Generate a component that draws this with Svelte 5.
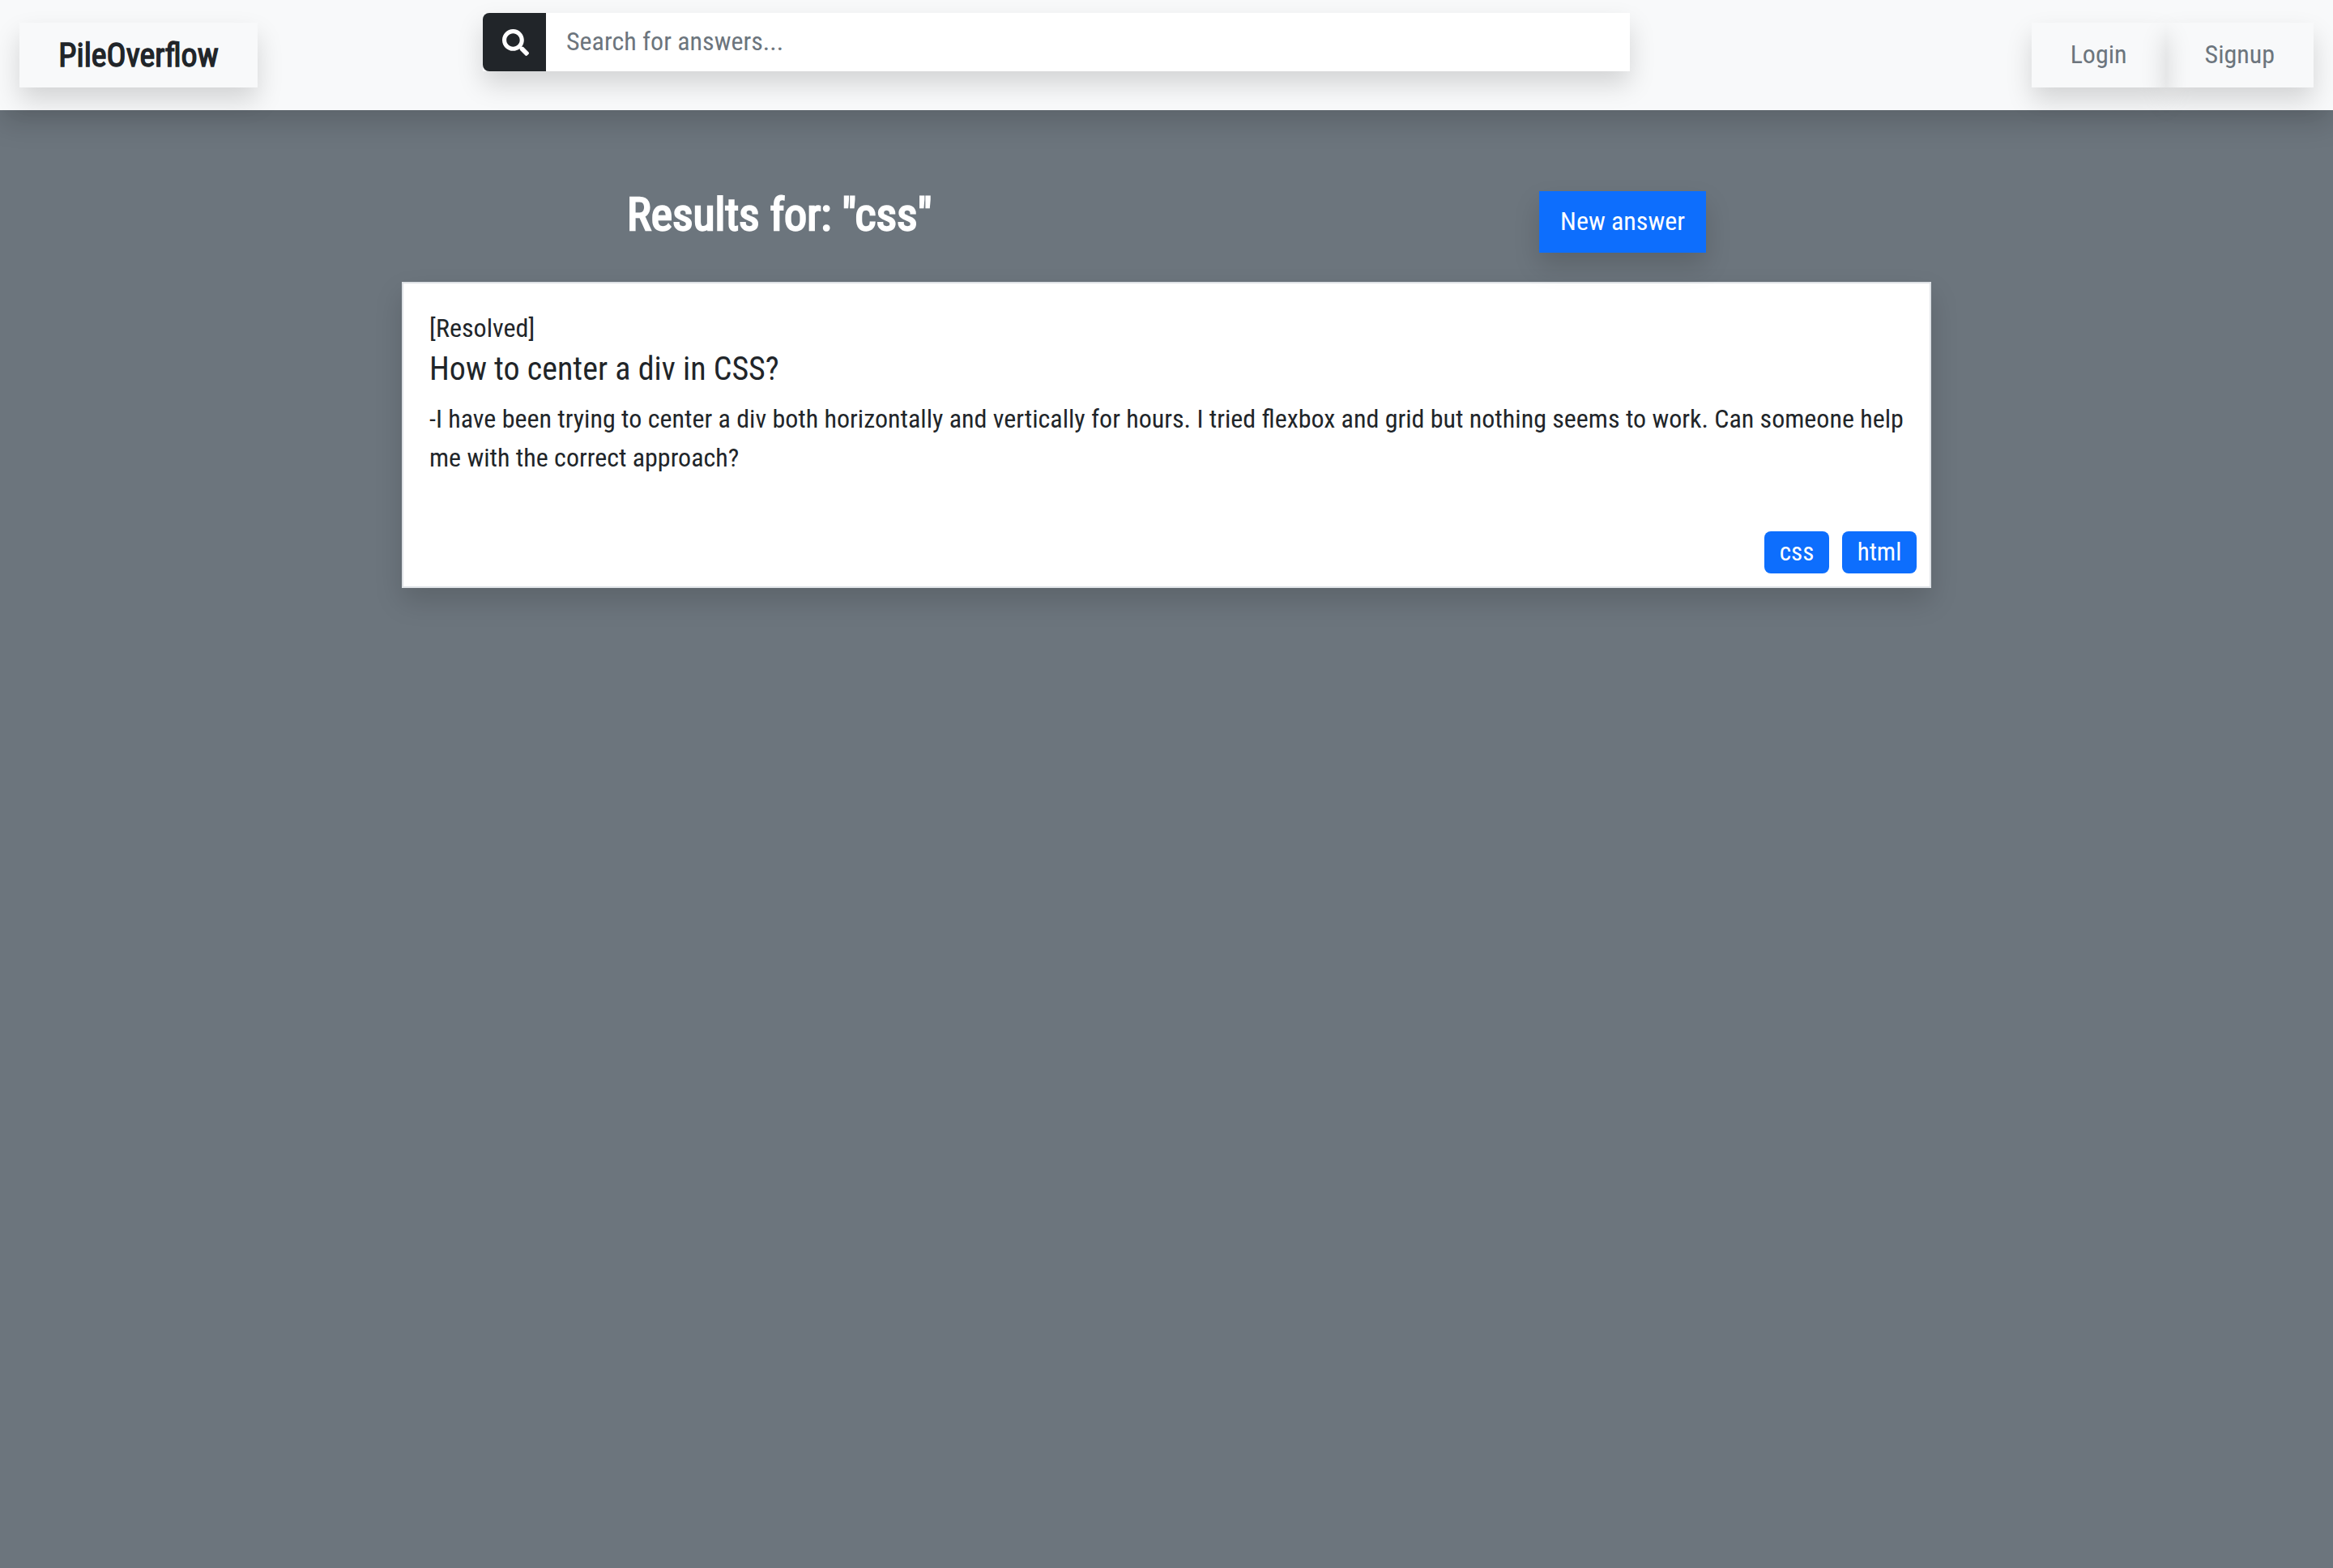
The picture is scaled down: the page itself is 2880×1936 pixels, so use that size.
<script>
  let query = 'css'
  let tags = ['css', 'html']
</script>

<div class="page">
  <nav class="navbar">
    <a class="brand" href="/">PileOverflow</a>
    <form class="search">
      <span class="search-icon">
        <svg viewBox="0 0 512 512" width="33" height="33" aria-hidden="true">
          <path fill="#fff" d="M505 442.7L405.3 343c-4.5-4.5-10.6-7-17-7H372c27.6-35.3 44-79.7 44-128C416 93.1 322.9 0 208 0S0 93.1 0 208s93.1 208 208 208c48.3 0 92.7-16.4 128-44v16.3c0 6.4 2.5 12.5 7 17l99.7 99.7c9.4 9.4 24.6 9.4 33.9 0l28.3-28.3c9.4-9.4 9.4-24.6.1-34zM208 336c-70.7 0-128-57.2-128-128 0-70.7 57.2-128 128-128 70.7 0 128 57.2 128 128 0 70.7-57.2 128-128 128z"/>
        </svg>
      </span>
      <input placeholder="Search for answers..." />
    </form>
    <div class="auth">
      <a href="/login">Login</a>
      <a href="/signup">Signup</a>
    </div>
  </nav>

  <main class="container">
    <div class="results-head">
      <h3>Results for: "{query}"</h3>
      <button class="new-answer">New answer</button>
    </div>

    <article class="card">
      <div class="status">[Resolved]</div>
      <h5>How to center a div in CSS?</h5>
      <p>-I have been trying to center a div both horizontally and vertically for hours. I tried flexbox and grid but nothing seems to work. Can someone help me with the correct approach?</p>
      <div class="tags">
        {#each tags as tag}
          <span class="tag">{tag}</span>
        {/each}
      </div>
    </article>
  </main>
</div>

<style>
  :global(body) {
    margin: 0;
    background: #6c757d;
  }

  .page {
    min-height: 1936px;
    background: #6c757d;
    font-family: Roboto, "Liberation Sans", sans-serif;
    font-stretch: 75%;
    font-size: 32px;
    line-height: 48px;
    color: #212529;
  }

  .navbar {
    display: flex;
    align-items: flex-start;
    height: 136px;
    box-sizing: border-box;
    padding: 0 24px;
    background: #f8f9fa;
    box-shadow: 0 16px 32px rgba(0, 0, 0, 0.15);
    position: relative;
  }

  .brand {
    display: block;
    box-sizing: border-box;
    width: 294px;
    height: 80px;
    margin-top: 28px;
    font-size: 40px;
    font-weight: 400;
    -webkit-text-stroke: 1.4px #212529;
    line-height: 82px;
    text-align: center;
    text-decoration: none;
    color: #212529;
    box-shadow: 0 16px 32px rgba(0, 0, 0, 0.15);
  }

  .search {
    display: flex;
    width: 1416px;
    height: 72px;
    margin: 16px 0 0 278px;
    box-shadow: 0 16px 32px rgba(0, 0, 0, 0.15);
  }

  .search-icon {
    display: flex;
    align-items: center;
    justify-content: center;
    width: 78px;
    padding-left: 3px;
    box-sizing: border-box;
    background: #212529;
    border-radius: 8px 0 0 8px;
  }

  .search input {
    flex: 1;
    min-width: 0;
    box-sizing: border-box;
    padding: 0 25px 2px;
    border: 0;
    outline: 0;
    background: #fff;
    font: inherit;
    font-stretch: 75%;
  }

  .search input::placeholder {
    color: #6c757d;
    opacity: 1;
  }

  .auth {
    display: flex;
    margin: 28px 0 0 auto;
  }

  .auth a {
    height: 80px;
    padding: 0 48px;
    line-height: 78px;
    text-decoration: none;
    color: #6c757d;
    box-shadow: 0 16px 32px rgba(0, 0, 0, 0.15);
  }

  .container {
    width: 1888px;
    margin: 0 auto;
  }

  .results-head {
    display: flex;
    align-items: flex-start;
    height: 212px;
  }

  h3 {
    margin: 96px 0 0 278px;
    font-size: 56px;
    line-height: 1.2;
    font-weight: 400;
    -webkit-text-stroke: 2.4px #fff;
    color: #fff;
  }

  .new-answer {
    height: 76px;
    margin: 100px 278px 0 auto;
    padding: 0 26px 2px;
    border: 0;
    background: #0d6efd;
    color: #fff;
    font: inherit;
    font-stretch: 75%;
    box-shadow: 0 16px 32px rgba(0, 0, 0, 0.15);
  }

  .card {
    box-sizing: border-box;
    height: 378px;
    padding: 31px 16px 16px 32px;
    border: 2px solid #dee2e6;
    background: #fff;
    box-shadow: 0 16px 32px rgba(0, 0, 0, 0.15);
  }

  h5 {
    margin: 3px 0 13px;
    font-size: 40px;
    line-height: 48px;
    font-weight: 400;
  }

  p {
    margin: 0;
  }

  .tags {
    display: flex;
    justify-content: flex-end;
    gap: 16px;
    margin-top: 67px;
  }

  .tag {
    box-sizing: border-box;
    height: 52px;
    width: 80px;
    border-radius: 8px;
    background: #0d6efd;
    color: #fff;
    font-size: 31px;
    line-height: 52px;
    text-align: center;
  }

  .tag:last-child {
    width: 92px;
  }
</style>
